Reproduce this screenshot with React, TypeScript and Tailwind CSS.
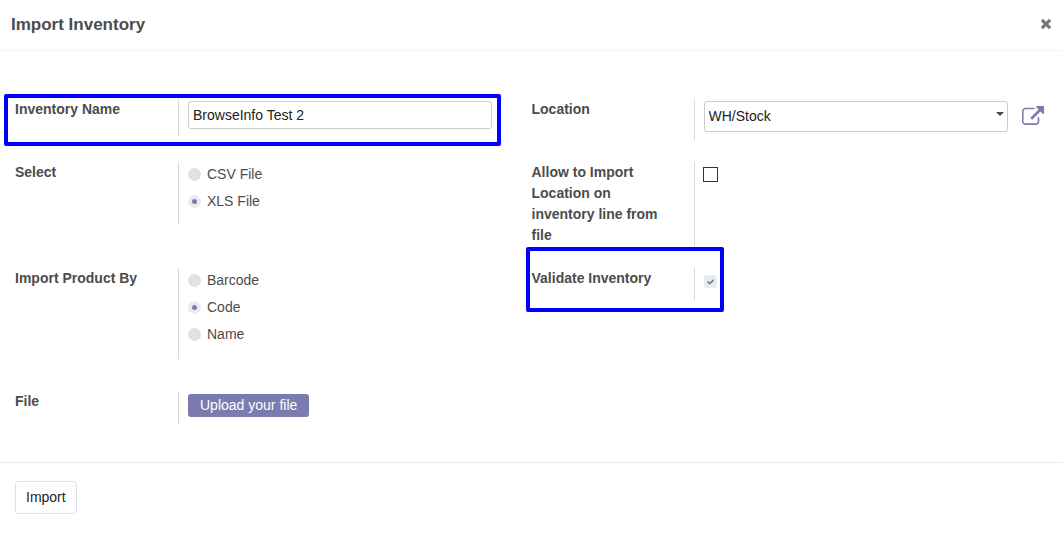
import React, { useState } from "react";

const radioClass =
  "grid h-[13px] w-[13px] shrink-0 appearance-none place-content-center rounded-full bg-[#dee2e6] checked:bg-[#e9ecef] before:h-[5px] before:w-[5px] before:rounded-full checked:before:bg-[#7c7bad] before:content-['']";

const labelText = "shrink-0 pr-6 font-bold leading-[21px] text-[#4c4c4c]";
const labelClass = "w-[163px] " + labelText;
const rightLabelClass = "w-[162px] " + labelText;
const fieldClass = "min-w-0 flex-1 border-l border-[#d9d9d9]";

function Highlight({ className }: { className: string }) {
  return (
    <div
      aria-hidden="true"
      className={"pointer-events-none absolute rounded-[2px] border-4 border-[#0000ff] " + className}
    />
  );
}

function RadioRow({
  label,
  name,
  options,
  initial,
  className,
}: {
  label: string;
  name: string;
  options: string[];
  initial: string;
  className: string;
}) {
  const [value, setValue] = useState(initial);
  return (
    <div role="radiogroup" aria-labelledby={name + "-label"} className={"flex " + className}>
      <div id={name + "-label"} className={labelClass}>
        {label}
      </div>
      <div className={fieldClass + " flex flex-col gap-[6px] pt-[2px] pl-[9px]"}>
        {options.map((option) => (
          <label key={option} className="flex items-center gap-[6px] leading-[21px]">
            <input
              type="radio"
              name={name}
              value={option}
              checked={value === option}
              onChange={() => setValue(option)}
              className={radioClass}
            />
            {option}
          </label>
        ))}
      </div>
    </div>
  );
}

export default function App() {
  return (
    <div className="min-h-screen bg-white font-['Liberation_Sans',Arial,sans-serif] text-[14px] text-[#4c4c4c]">
      <header className="flex items-start justify-between border-b border-[#f5f5f5] pt-[13px] pr-3 pb-[13px] pl-[11px]">
        <h1 className="text-[17px] leading-6 font-bold">Import Inventory</h1>
        <button type="button" aria-label="Close" className="pt-[6px] text-[#777777]">
          <svg viewBox="110 366 1188 1188" className="h-[10px] w-[10px]" fill="currentColor">
            <path d="M1298 1322q0 40-28 68l-136 136q-28 28-68 28t-68-28l-294-294-294 294q-28 28-68 28t-68-28l-136-136q-28-28-28-68t28-68l294-294-294-294q-28-28-28-68t28-68l136-136q28-28 68-28t68 28l294 294 294-294q28-28 68-28t68 28l136 136q28 28 28 68t-28 68l-294 294 294 294q28 28 28 68z" />
          </svg>
        </button>
      </header>

      <main className="grid grid-cols-2 items-start gap-y-[22px] border-b border-[#e9ecef] px-[15px] pt-12 pb-[37px]">
        <div className="relative flex pr-10">
          <label htmlFor="inventory-name" className={labelClass}>
            Inventory Name
          </label>
          <div className={fieldClass + " pt-[2px] pb-[7px] pl-[9px]"}>
            <input
              id="inventory-name"
              type="text"
              defaultValue="BrowseInfo Test 2"
              className="block h-7 w-full rounded-[3px] border border-[#cccccc] bg-white px-1 text-[#212121] outline-none"
            />
          </div>
          <Highlight className="-top-[5px] right-[31px] -bottom-[10px] -left-[11px]" />
        </div>

        <div className="flex pr-1">
          <label htmlFor="location" className={rightLabelClass}>
            Location
          </label>
          <div className={fieldClass + " flex items-start gap-[14px] pt-[2px] pb-2 pl-[9px]"}>
            <div className="relative min-w-0 flex-1">
              <select
                id="location"
                className="block h-[31px] w-full appearance-none rounded-[3px] border border-[#cccccc] bg-white pr-6 pb-px pl-1 text-[#212121] outline-none"
              >
                <option>WH/Stock</option>
              </select>
              <svg
                viewBox="0 0 8 4"
                className="pointer-events-none absolute top-[11px] right-1 h-1 w-2"
                fill="#4c4c4c"
              >
                <path d="M0 0h8L4 4z" />
              </svg>
            </div>
            <button type="button" aria-label="Open location" className="pt-[5px] text-[#7c7bad]">
              <svg viewBox="0 0 1792 1536" className="h-[19px] w-[22px]" fill="currentColor">
                <path d="M1408 928v320q0 119-84.500 203.500T1120 1536H288q-119 0-203.500-84.500T0 1248V416q0-119 84.500-203.500T288 128h704q14 0 23 9t9 23v64q0 14-9 23t-23 9H288q-66 0-113 47t-47 113v832q0 66 47 113t113 47h832q66 0 113-47t47-113V928q0-14 9-23t23-9h64q14 0 23 9t9 23zM1792 64v512q0 26-19 45t-45 19-45-19l-176-176-652 652q-10 10-23 10t-23-10L695 983q-10-10-10-23t10-23l652-652-176-176q-19-19-19-45t19-45 45-19h512q26 0 45 19t19 45z" />
              </svg>
            </button>
          </div>
        </div>

        <RadioRow
          label="Select"
          name="file-type"
          options={["CSV File", "XLS File"]}
          initial="XLS File"
          className="h-[63px]"
        />

        <div className="flex">
          <label htmlFor="allow-location" className={rightLabelClass}>
            Allow to Import Location on inventory line from file
          </label>
          <div className={fieldClass + " pt-[5px] pl-2"}>
            <input
              id="allow-location"
              type="checkbox"
              className="block h-[15px] w-[15px] appearance-none border border-[#333333] bg-white checked:bg-[#7c7bad]"
            />
          </div>
        </div>

        <RadioRow
          label="Import Product By"
          name="product-key"
          options={["Barcode", "Code", "Name"]}
          initial="Code"
          className="h-[91px]"
        />

        <div className="relative flex h-8">
          <label htmlFor="validate" className={rightLabelClass}>
            Validate Inventory
          </label>
          <div className={fieldClass + " pt-[7px] pl-[9px]"}>
            <div className="relative h-[13px] w-[13px]">
              <input
                id="validate"
                type="checkbox"
                defaultChecked
                className="peer block h-[13px] w-[13px] appearance-none rounded-[3px] bg-[#e9ecef]"
              />
              <svg
                viewBox="121 334 1550 1188"
                className="pointer-events-none absolute top-[4px] left-[3px] hidden h-[6px] w-[7px] peer-checked:block"
                fill="#7c7bad"
              >
                <path d="M1671 566q0 40-28 68l-724 724-136 136q-28 28-68 28t-68-28l-136-136-362-362q-28-28-28-68t28-68l136-136q28-28 68-28t68 28l294 295 656-657q28-28 68-28t68 28l136 136q28 28 28 68z" />
              </svg>
            </div>
          </div>
          <Highlight className="-top-[21px] -bottom-3 -left-[6px] w-[198px]" />
        </div>

        <div className="mt-[10px] flex h-[34px]">
          <label htmlFor="upload" className={labelClass}>
            File
          </label>
          <div className={fieldClass + " pt-[3px] pl-[9px]"}>
            <button
              id="upload"
              type="button"
              className="block h-[23px] rounded-[3px] bg-[#7c7bad] px-3 leading-[21px] text-white"
            >
              Upload your file
            </button>
          </div>
        </div>
      </main>

      <footer className="px-[15px] pt-[18px]">
        <button
          type="button"
          className="block rounded-[3px] border border-[#dee2e6] bg-white px-[10px] py-[5px] leading-[21px] text-[#212529]"
        >
          Import
        </button>
      </footer>
    </div>
  );
}
